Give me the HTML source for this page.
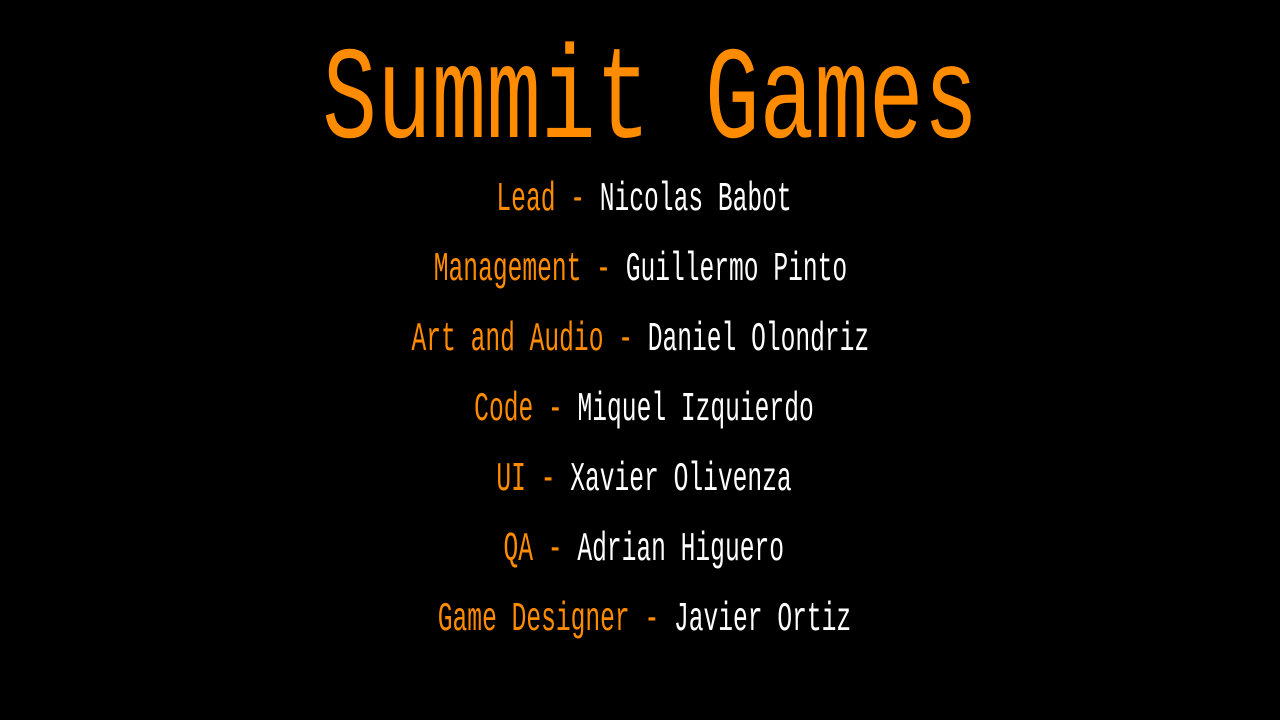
<!DOCTYPE html>
<html><head><meta charset="utf-8"><style>
html,body{margin:0;padding:0;background:#000;width:1280px;height:720px;overflow:hidden}
.l{position:absolute;left:0;width:1280px;text-align:center;font-family:"Liberation Mono",monospace;white-space:pre}
.l span{display:inline-block;transform:scaleX(0.6);transform-origin:center}
.t{top:36px;left:10px;font-size:132px;line-height:132px;color:#ff8c00}
.t span{transform:scaleX(0.69)}
.r{font-size:41px;line-height:42px;color:#fff}
.o{color:#ff8c00;font-weight:normal}
</style></head><body>
<div class="l t"><span>Summit Games</span></div>
<div class="l r" style="top:179px;left:4px"><span><b class="o">Lead - </b>Nicolas Babot</span></div>
<div class="l r" style="top:249px"><span><b class="o">Management - </b>Guillermo Pinto</span></div>
<div class="l r" style="top:319px"><span><b class="o">Art and Audio - </b>Daniel Olondriz</span></div>
<div class="l r" style="top:389px;left:4px"><span><b class="o">Code - </b>Miquel Izquierdo</span></div>
<div class="l r" style="top:459px;left:4px"><span><b class="o">UI - </b>Xavier Olivenza</span></div>
<div class="l r" style="top:529px;left:4px"><span><b class="o">QA - </b>Adrian Higuero</span></div>
<div class="l r" style="top:599px;left:4px"><span><b class="o">Game Designer - </b>Javier Ortiz</span></div>
</body></html>
